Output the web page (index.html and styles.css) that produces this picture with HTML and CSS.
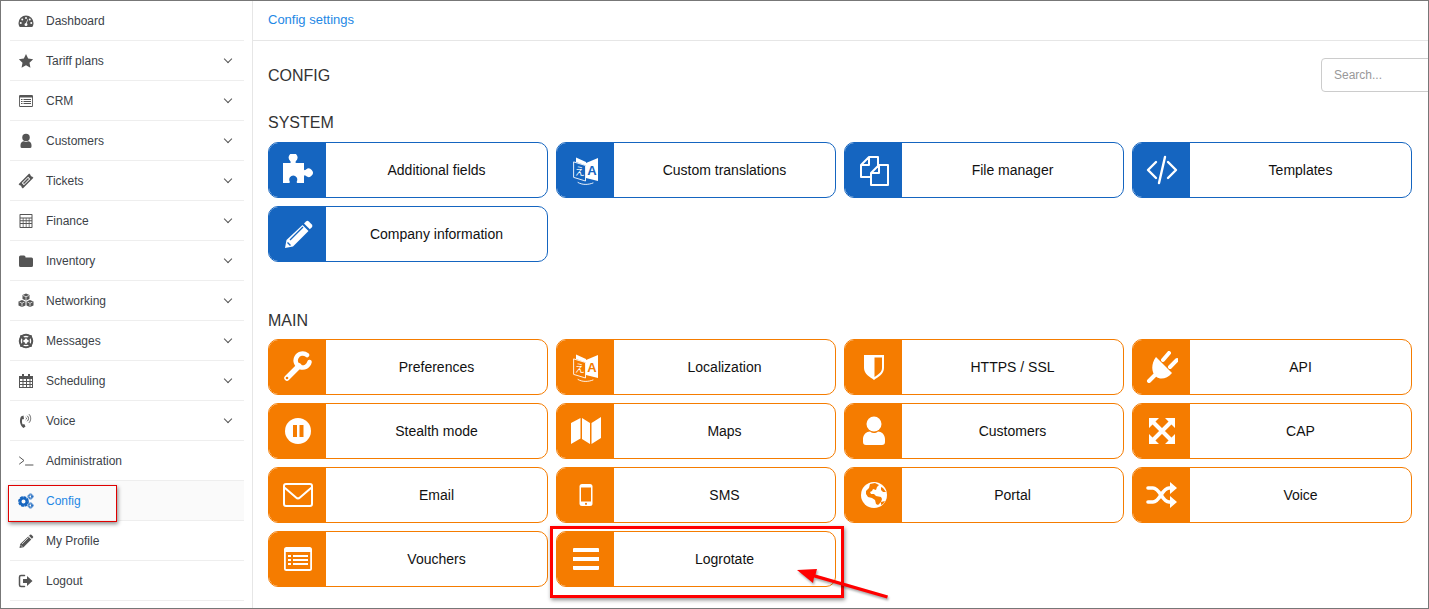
FILE: index.html
```html
<!DOCTYPE html>
<html>
<head>
<meta charset="utf-8">
<title>Config settings</title>
<link rel="stylesheet" href="styles.css">
</head>
<body>
<svg class="defs" xmlns="http://www.w3.org/2000/svg">
	<symbol id="i-dashboard" viewBox="0 0 32 32">
		<path d="M16 5A15 15 0 0 0 1 20c0 3 1 6 2.500 8h25c1.500-2 2.500-5 2.500-8A15 15 0 0 0 16 5z"/>
		<g class="cut"><circle cx="16" cy="10" r="2"/><circle cx="8.500" cy="13" r="2"/><circle cx="23.500" cy="13" r="2"/><circle cx="5.500" cy="20" r="2"/><circle cx="26.500" cy="20" r="2"/><path d="M13 23a3 3 0 1 0 6 0 3 3 0 0 0-1.500-2.600L20 13l-1-.4-3 7.400a3 3 0 0 0-3 3z"/></g>
	</symbol>
	<symbol id="i-star" viewBox="0 0 32 32"><path d="M16 2l4.300 9.200 10 1.300-7.300 7 1.900 10L16 24.600l-8.900 4.900 1.900-10-7.300-7 10-1.300z"/></symbol>
	<symbol id="i-list" viewBox="0 0 32 32">
		<rect x="2" y="4" width="28" height="24" rx="2.500"/>
		<rect class="cut" x="3.800" y="9" width="24.400" height="17"/>
		<path d="M6 12h3v2H6zM11 12h15v2H11zM6 16h3v2H6zM11 16h15v2H11zM6 20h3v2H6zM11 20h15v2H11z"/>
	</symbol>
	<symbol id="i-user" viewBox="0 0 32 32">
		<circle cx="16" cy="9" r="7.500"/>
		<path d="M5 27v-3c0-4.500 3.500-7.500 7-7.500 2.500 2 5.500 2 8 0 3.500 0 7 3 7 7.500v3a3 3 0 0 1-3 3H8a3 3 0 0 1-3-3z"/>
	</symbol>
	<symbol id="i-ticket" viewBox="0 0 32 32">
		<g transform="rotate(-45 16 16)">
			<path d="M1 10h30v4a2.500 2.500 0 0 0 0 4v4H1v-4a2.500 2.500 0 0 0 0-4z"/>
			<rect class="cut" x="7" y="13" width="18" height="6"/>
			<rect x="9" y="14.500" width="14" height="3"/>
		</g>
	</symbol>
	<symbol id="i-calc" viewBox="0 0 32 32">
		<rect x="3" y="2" width="26" height="28" rx="1.500"/>
		<path class="cut" d="M5 4h22v5H5zM5 11h4.500v3.500H5zM11 11h4.500v3.500H11zM17 11h4.500v3.500H17zM23 11h4v3.500h-4zM5 16.500h4.500V20H5zM11 16.500h4.500V20H11zM17 16.500h4.500V20H17zM23 16.500h4V20h-4zM5 22h4.500v6H5zM11 22h4.500v6H11zM17 22h4.500v6H17zM23 22h4v6h-4z"/>
	</symbol>
	<symbol id="i-folder" viewBox="0 0 32 32"><path d="M2 8a3 3 0 0 1 3-3h7a3 3 0 0 1 3 3v1h12a3 3 0 0 1 3 3v13a3 3 0 0 1-3 3H5a3 3 0 0 1-3-3z"/></symbol>
	<symbol id="i-cubes" viewBox="0 0 32 32">
		<path d="M16 1l7 3v8l-7 3-7-3V4z"/>
		<path d="M8 14l7 3v8l-7 3-7-3v-8z"/>
		<path d="M24 14l7 3v8l-7 3-7-3v-8z"/>
		<path class="line-cut" d="M10 5l6 2.500L22 5M16 7.500V14M3 18l5 2.500 5-2.500M8 20.500V27M19 18l5 2.500 5-2.500M24 20.500V27"/>
	</symbol>
	<symbol id="i-ring" viewBox="0 0 32 32">
		<circle class="stroke" cx="16" cy="16" r="12.500" stroke-width="4"/>
		<circle class="stroke" cx="16" cy="16" r="6.500" stroke-width="2.500"/>
		<path class="stroke" stroke-width="5" stroke-linecap="butt" d="M6.500 6.500l5 5M25.500 6.500l-5 5M6.500 25.500l5-5M25.500 25.500l-5-5"/>
	</symbol>
	<symbol id="i-calendar" viewBox="0 0 32 32">
		<path d="M2 6h6V2h4v4h8V2h4v4h6v24H2z"/>
		<path class="cut" d="M4 12h5v4H4zM11 12h5v4h-5zM18 12h5v4h-5zM25 12h3v4h-3zM4 18h5v4H4zM11 18h5v4h-5zM18 18h5v4h-5zM25 18h3v4h-3zM4 24h5v4H4zM11 24h5v4h-5zM18 24h5v4h-5zM25 24h3v4h-3z"/>
	</symbol>
	<symbol id="i-phone" viewBox="0 0 32 32">
		<path d="M11 5L6 7C2 15 4 25 11 30l4-3-2.500-5-3 1c-2-3-2-8-.5-11l3 .5z"/>
		<path class="stroke" stroke-width="1.800" d="M16 9c1.500 1 1.500 3 0 4M19 6c3 2.500 3 7.500 0 10M22.500 3c4 4 4 12 0 16"/>
	</symbol>
	<symbol id="i-terminal" viewBox="0 0 32 32"><path class="stroke" stroke-width="2" d="M3 8l9 7-9 7M15 24h15"/></symbol>
	<symbol id="i-cogs" viewBox="0 0 32 32">
		<circle class="stroke" cx="11" cy="17" r="6" stroke-width="4"/>
		<circle class="stroke" cx="11" cy="17" r="9" stroke-width="3.500" stroke-dasharray="3.300 3.770"/>
		<circle class="stroke" cx="25" cy="7" r="3" stroke-width="2"/>
		<circle class="stroke" cx="25" cy="7" r="5" stroke-width="2" stroke-dasharray="2 1.930"/>
		<circle class="stroke" cx="25" cy="25" r="3" stroke-width="2"/>
		<circle class="stroke" cx="25" cy="25" r="5" stroke-width="2" stroke-dasharray="2 1.930"/>
	</symbol>
	<symbol id="i-logout" viewBox="0 0 32 32">
		<path class="stroke" stroke-width="3" d="M13 5H6a3 3 0 0 0-3 3v16a3 3 0 0 0 3 3h7"/>
		<path d="M10 12h8V6l11 10-11 10v-6h-8z"/>
	</symbol>
	<symbol id="i-puzzle" viewBox="0 0 32 32"><path d="M1 9h7c1 0 1-1 .2-2A4.500 4.500 0 1 1 14 7c-.8 1-.8 2 .5 2H22v6c0 1.500 1 1.500 2 .5a4.200 4.200 0 1 1 0 6.500c-1-1-2-1-2 1v6h-6c-1.500 0-1.500-1-1-2a4 4 0 1 0-7.500 0c.5 1 .5 2-1 2H1z"/></symbol>
	<symbol id="i-translate" viewBox="0 0 32 32">
		<path class="stroke thin" d="M4 8l11.500 3.500V27L4 23.500zM8 28.500c4 2.500 10 2.500 15 .5"/>
		<path d="M6 3.500l10 4.500v3.500L6 8z"/>
		<path d="M16 9l12-5v23l-12-3z"/>
		<text class="glyph-a" x="22" y="21">A</text>
		<text class="glyph-b" x="9.800" y="21">え</text>
	</symbol>
	<symbol id="i-files" viewBox="0 0 32 32">
		<path class="stroke" stroke-width="2" d="M20 11V3h-9L3 11v12h9M11 3v8H3"/>
		<path class="stroke" stroke-width="2" d="M21 11h9v20H13V19zM21 11v8h-8"/>
	</symbol>
	<symbol id="i-code" viewBox="0 0 32 32"><path class="stroke" stroke-width="2.400" d="M10 8l-8 8 8 8M22 8l8 8-8 8M19 3l-6 26"/></symbol>
	<symbol id="i-pencil" viewBox="0 0 32 32">
		<path d="M20.500 7l6 6L11 28.500l-8 1.500 1.500-8z"/>
		<path d="M22 5.500l2-2a2 2 0 0 1 2.800 0l3 3a2 2 0 0 1 0 2.800l-2 2z"/>
		<path class="line-cut" d="M8 22L21 9M5.500 24.500l3 3"/>
	</symbol>
	<symbol id="i-wrench" viewBox="0 0 32 32">
		<path class="stroke" stroke-width="5.500" d="M5 27l12-12"/>
		<path class="stroke" stroke-width="4.500" d="M25 4A7 7 0 1 0 27.500 11"/>
		<circle class="cut" cx="5" cy="27" r="1.300"/>
	</symbol>
	<symbol id="i-shield" viewBox="0 0 32 32">
		<path d="M6 4h20v13c0 6-6 9-10 12-4-3-10-6-10-12z"/>
		<path class="cut" d="M16.500 6.500H24V17c0 4-3.500 6.500-7.500 9z"/>
	</symbol>
	<symbol id="i-plug" viewBox="0 0 32 32">
		<path class="stroke" stroke-width="4" d="M3 30l6-6M17 9l6-7M24 16l7-7"/>
		<path d="M10 6l16 16c-5 6-12 7-16 3.500-5-4-5-13 0-19.500z"/>
	</symbol>
	<symbol id="i-pause" viewBox="0 0 32 32">
		<circle cx="16" cy="16" r="13"/>
		<path class="cut" d="M11 10h4v12h-4zM17.500 10h4v12h-4z"/>
	</symbol>
	<symbol id="i-map" viewBox="0 0 32 32"><path d="M1 8l9.500-5v20.500L1 29zM12 3l8 5v21l-8-5zM21.500 8L31 2v21l-9.500 6z"/></symbol>
	<symbol id="i-arrows" viewBox="0 0 32 32">
		<path class="stroke" stroke-width="4" stroke-linecap="butt" d="M7 7l18 18M25 7L7 25"/>
		<path d="M3 3h10L3 13zM29 3v10L19 3zM3 29V19l10 10zM29 29H19l10-10z"/>
	</symbol>
	<symbol id="i-mail" viewBox="0 0 32 32">
		<rect class="stroke" x="2" y="5" width="28" height="22" rx="2" stroke-width="2"/>
		<path class="stroke" stroke-width="2" d="M3 9l11 9.500a3 3 0 0 0 4 0L29 9"/>
	</symbol>
	<symbol id="i-mobile" viewBox="0 0 32 32">
		<rect x="9.500" y="5" width="13" height="22" rx="2.500"/>
		<rect class="cut" x="11" y="8.500" width="10" height="14"/>
		<circle class="cut" cx="16" cy="24.800" r="1.100"/>
	</symbol>
	<symbol id="i-globe" viewBox="0 0 32 32">
		<circle cx="16" cy="16" r="13"/>
		<path class="cut" d="M12 5l5-1 4 2-2 2-1 3-3-1-1 2-2 1 1 2 3 0 2 2 5 1 1 2-1 3-3 3-2-1-1-4-3-2-4-1-2-3v-3l3-3zM23 23l4-1-2 3-2 1zM23 8l2 1 3 4-3 0-2-2z"/>
	</symbol>
	<symbol id="i-random" viewBox="0 0 32 32">
		<path class="stroke" stroke-width="3.600" stroke-linecap="butt" d="M2 9h5c7 0 9 14 16 14h2M2 23h5c7 0 9-14 16-14h2"/>
		<path d="M24 3l7 6-7 6zM24 17l7 6-7 6z"/>
	</symbol>
	<symbol id="i-bars" viewBox="0 0 32 32"><path d="M3 6a1 1 0 0 1 1-1h24a1 1 0 0 1 1 1v3H3zM3 14h26v4H3zM3 23h26v3a1 1 0 0 1-1 1H4a1 1 0 0 1-1-1z"/></symbol>
</svg>

<div class="frame">
	<nav class="sidebar">
		<a class="nav-item"><svg class="nav-icon"><use href="#i-dashboard"/></svg><span>Dashboard</span></a>
		<a class="nav-item"><svg class="nav-icon"><use href="#i-star"/></svg><span>Tariff plans</span><i class="chevron"></i></a>
		<a class="nav-item"><svg class="nav-icon"><use href="#i-list"/></svg><span>CRM</span><i class="chevron"></i></a>
		<a class="nav-item"><svg class="nav-icon"><use href="#i-user"/></svg><span>Customers</span><i class="chevron"></i></a>
		<a class="nav-item"><svg class="nav-icon"><use href="#i-ticket"/></svg><span>Tickets</span><i class="chevron"></i></a>
		<a class="nav-item"><svg class="nav-icon"><use href="#i-calc"/></svg><span>Finance</span><i class="chevron"></i></a>
		<a class="nav-item"><svg class="nav-icon"><use href="#i-folder"/></svg><span>Inventory</span><i class="chevron"></i></a>
		<a class="nav-item"><svg class="nav-icon"><use href="#i-cubes"/></svg><span>Networking</span><i class="chevron"></i></a>
		<a class="nav-item"><svg class="nav-icon"><use href="#i-ring"/></svg><span>Messages</span><i class="chevron"></i></a>
		<a class="nav-item"><svg class="nav-icon"><use href="#i-calendar"/></svg><span>Scheduling</span><i class="chevron"></i></a>
		<a class="nav-item"><svg class="nav-icon"><use href="#i-phone"/></svg><span>Voice</span><i class="chevron"></i></a>
		<a class="nav-item"><svg class="nav-icon"><use href="#i-terminal"/></svg><span>Administration</span></a>
		<a class="nav-item active"><svg class="nav-icon"><use href="#i-cogs"/></svg><span>Config</span></a>
		<a class="nav-item"><svg class="nav-icon"><use href="#i-pencil"/></svg><span>My Profile</span></a>
		<a class="nav-item"><svg class="nav-icon"><use href="#i-logout"/></svg><span>Logout</span></a>
	</nav>

	<main class="content">
		<div class="topbar"><a class="crumb">Config settings</a></div>
		<div class="page">
			<div class="page-head">
				<h1>CONFIG</h1>
				<input class="search" type="text" placeholder="Search...">
			</div>

			<h2 class="section-title">SYSTEM</h2>
			<div class="tiles blue">
				<a class="tile"><span class="tile-icon"><svg><use href="#i-puzzle"/></svg></span><span class="tile-name">Additional fields</span></a>
				<a class="tile"><span class="tile-icon"><svg><use href="#i-translate"/></svg></span><span class="tile-name">Custom translations</span></a>
				<a class="tile"><span class="tile-icon"><svg><use href="#i-files"/></svg></span><span class="tile-name">File manager</span></a>
				<a class="tile"><span class="tile-icon"><svg><use href="#i-code"/></svg></span><span class="tile-name">Templates</span></a>
				<a class="tile"><span class="tile-icon"><svg><use href="#i-pencil"/></svg></span><span class="tile-name">Company information</span></a>
			</div>

			<h2 class="section-title main-title">MAIN</h2>
			<div class="tiles orange">
				<a class="tile"><span class="tile-icon"><svg><use href="#i-wrench"/></svg></span><span class="tile-name">Preferences</span></a>
				<a class="tile"><span class="tile-icon"><svg><use href="#i-translate"/></svg></span><span class="tile-name">Localization</span></a>
				<a class="tile"><span class="tile-icon"><svg><use href="#i-shield"/></svg></span><span class="tile-name">HTTPS / SSL</span></a>
				<a class="tile"><span class="tile-icon"><svg><use href="#i-plug"/></svg></span><span class="tile-name">API</span></a>
				<a class="tile"><span class="tile-icon"><svg><use href="#i-pause"/></svg></span><span class="tile-name">Stealth mode</span></a>
				<a class="tile"><span class="tile-icon"><svg><use href="#i-map"/></svg></span><span class="tile-name">Maps</span></a>
				<a class="tile"><span class="tile-icon"><svg><use href="#i-user"/></svg></span><span class="tile-name">Customers</span></a>
				<a class="tile"><span class="tile-icon"><svg><use href="#i-arrows"/></svg></span><span class="tile-name">CAP</span></a>
				<a class="tile"><span class="tile-icon"><svg><use href="#i-mail"/></svg></span><span class="tile-name">Email</span></a>
				<a class="tile"><span class="tile-icon"><svg><use href="#i-mobile"/></svg></span><span class="tile-name">SMS</span></a>
				<a class="tile"><span class="tile-icon"><svg><use href="#i-globe"/></svg></span><span class="tile-name">Portal</span></a>
				<a class="tile"><span class="tile-icon"><svg><use href="#i-random"/></svg></span><span class="tile-name">Voice</span></a>
				<a class="tile"><span class="tile-icon"><svg><use href="#i-list"/></svg></span><span class="tile-name">Vouchers</span></a>
				<a class="tile"><span class="tile-icon"><svg><use href="#i-bars"/></svg></span><span class="tile-name">Logrotate</span></a>
			</div>
		</div>
	</main>

	<!-- annotations drawn over the screenshot -->
	<div class="mark mark-config"></div>
	<div class="mark mark-logrotate"></div>
	<svg class="mark-arrow" viewBox="0 0 110 50">
		<path d="M3 17l20-1-1.500 5.500L94 42.500l-1 3L20 24.500 19 30z"/>
	</svg>
</div>
</body>
</html>
```

FILE: styles.css
```css
* {
	box-sizing: border-box;
	margin: 0;
	padding: 0;
}
body {
	background: #fff;
	color: #333;
	font-family: "Liberation Sans", Arial, sans-serif;
}
a {
	color: inherit;
	text-decoration: none;
}
.defs {
	display: none;
}

/* icons */
svg {
	fill: currentColor;
}
.cut {
	fill: var(--tile);
}
.stroke {
	fill: none;
	stroke: currentColor;
	stroke-linecap: round;
	stroke-linejoin: round;
}
.thin {
	stroke-width: 0.9;
}
.line-cut {
	fill: none;
	stroke: var(--tile);
	stroke-width: 1.4;
}
.glyph-a {
	fill: var(--tile);
	font-family: "Liberation Sans", sans-serif;
	font-size: 13px;
	font-weight: bold;
	text-anchor: middle;
}
.glyph-b {
	fill: currentColor;
	font-family: "Noto Sans CJK JP", sans-serif;
	font-size: 10px;
	text-anchor: middle;
}

/* page frame */
.frame {
	border: 1px solid #777;
	display: flex;
	height: 609px;
	overflow: hidden;
	position: relative;
	width: 1429px;
	--tile: #fff;
}

/* sidebar */
.sidebar {
	border-right: 1px solid #e6e6e6;
	flex: none;
	padding: 0 8px 0 9px;
	width: 252px;
}
.nav-item {
	align-items: center;
	border-bottom: 1px solid #eee;
	color: #3c4248;
	display: flex;
	font-size: 12px;
	height: 40px;
	padding: 0 12px 0 8px;
}
.nav-icon {
	color: #555;
	flex: none;
	height: 16px;
	margin-right: 12px;
	width: 16px;
}
.nav-item.active {
	background: #fafafa;
	color: #1e88e5;
}
.nav-item.active .nav-icon {
	color: #1565c0;
}
.chevron {
	border-bottom: 1px solid #555;
	border-right: 1px solid #555;
	height: 6px;
	margin: -3px 1px 0 auto;
	transform: rotate(45deg);
	width: 6px;
}

/* content */
.content {
	flex: 1;
	min-width: 0;
}
.topbar {
	align-items: center;
	border-bottom: 1px solid #e6e6e6;
	display: flex;
	height: 40px;
	padding: 0 15px;
}
.crumb {
	color: #1e88e5;
	font-size: 13px;
	margin-top: -3px;
}
.page {
	padding: 17px 15px 0;
}
.page-head {
	align-items: center;
	display: flex;
	height: 34px;
	justify-content: space-between;
}
h1 {
	font-size: 16px;
	font-weight: normal;
	margin-top: 1px;
}
.search {
	border: 1px solid #ccc;
	border-radius: 4px;
	color: #333;
	font-family: inherit;
	font-size: 12px;
	height: 34px;
	margin-right: -30px;
	outline: none;
	padding: 0 12px;
	width: 122px;
}
.search::placeholder {
	color: #999;
}
.section-title {
	font-size: 16px;
	font-weight: normal;
	line-height: 20px;
	margin: 21px 0 9px;
}
.main-title {
	margin: 49px 0 8px;
}

/* tiles */
.tiles {
	display: grid;
	gap: 8px;
	grid-template-columns: repeat(4, 280px);
}
.blue {
	--tile: #1565c0;
}
.orange {
	--tile: #f57c00;
}
.tile {
	background: #fff;
	border: 1px solid var(--tile);
	border-radius: 10px;
	color: #111;
	display: flex;
	font-size: 14px;
	height: 56px;
	overflow: hidden;
}
.tile-icon {
	align-items: center;
	background: var(--tile);
	color: #fff;
	display: flex;
	flex: none;
	height: 100%;
	justify-content: center;
	width: 57px;
}
.tile-icon svg {
	height: 32px;
	width: 32px;
}
.tile-name {
	align-self: center;
	flex: 1;
	margin-top: -1px;
	text-align: center;
}

/* red annotations */
.mark {
	border: 1px solid #e00000;
	box-shadow: 1px 2px 4px rgba(0, 0, 0, .45);
	position: absolute;
}
.mark-config {
	height: 37px;
	left: 7px;
	top: 484px;
	width: 109px;
}
.mark-logrotate {
	border: 3px solid #f00;
	height: 72px;
	left: 549px;
	top: 525px;
	width: 294px;
}
.mark-arrow {
	color: #f00;
	filter: drop-shadow(1px 2px 1px rgba(0, 0, 0, .35));
	height: 50px;
	left: 793px;
	position: absolute;
	top: 552px;
	width: 110px;
}
```
